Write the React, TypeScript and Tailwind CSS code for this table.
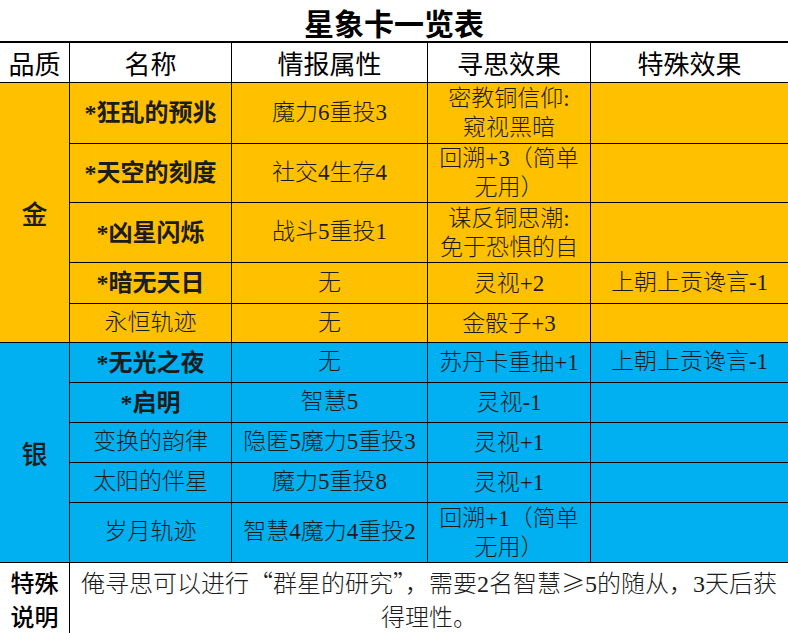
import React from "react";

type Card = {
  name: string;
  star?: boolean;
  info: string;
  think: string[];
  special?: string;
};

const goldCards: Card[] = [
  { name: "*狂乱的预兆", star: true, info: "魔力6重投3", think: ["密教铜信仰:", "窥视黑暗"] },
  { name: "*天空的刻度", star: true, info: "社交4生存4", think: ["回溯+3（简单", "无用）"] },
  { name: "*凶星闪烁", star: true, info: "战斗5重投1", think: ["谋反铜思潮:", "免于恐惧的自"] },
  { name: "*暗无天日", star: true, info: "无", think: ["灵视+2"], special: "上朝上贡谗言-1" },
  { name: "永恒轨迹", info: "无", think: ["金骰子+3"] },
];

const silverCards: Card[] = [
  { name: "*无光之夜", star: true, info: "无", think: ["苏丹卡重抽+1"], special: "上朝上贡谗言-1" },
  { name: "*启明", star: true, info: "智慧5", think: ["灵视-1"] },
  { name: "变换的韵律", info: "隐匿5魔力5重投3", think: ["灵视+1"] },
  { name: "太阳的伴星", info: "魔力5重投8", think: ["灵视+1"] },
  { name: "岁月轨迹", info: "智慧4魔力4重投2", think: ["回溯+1（简单", "无用）"] },
];

const serif = "font-['Liberation_Serif','Noto_Sans_CJK_SC',serif]";
const sans = "font-['Noto_Sans_CJK_SC','Liberation_Sans',sans-serif]";

function Cell({
  bg,
  children,
  className = "",
}: {
  bg: string;
  children?: React.ReactNode;
  className?: string;
}) {
  return (
    <div
      className={`${bg} flex flex-col items-center justify-center text-center overflow-hidden ${className}`}
    >
      {children}
    </div>
  );
}

function CardRow({ card, bg }: { card: Card; bg: string }) {
  return (
    <>
      <Cell
        bg={bg}
        className={`${serif} text-[#1c1c1c] whitespace-nowrap ${card.star ? "text-[24px] font-bold" : "text-[23px] font-light"}`}
      >
        {card.name}
      </Cell>
      <Cell bg={bg} className={`${serif} text-[23px] font-light text-[#1c1c1c] whitespace-nowrap`}>
        {card.info}
      </Cell>
      <Cell bg={bg} className={`${serif} text-[23px] font-light text-[#1c1c1c] leading-[29px] whitespace-nowrap`}>
        {card.think.map((line) => (
          <span key={line}>{line}</span>
        ))}
      </Cell>
      <Cell bg={bg} className={`${serif} text-[23px] font-light text-[#1c1c1c] whitespace-nowrap`}>
        {card.special}
      </Cell>
    </>
  );
}

export default function App() {
  const gold = "bg-[#ffc000]";
  const blue = "bg-[#00b0f0]";

  return (
    <div className="w-[788px] bg-white">
      {/* 标题 */}
      <div className={`h-[41px] pt-[2px] flex items-center justify-center ${sans} text-[30px] leading-[36px] font-bold text-black`}>
        星象卡一览表
      </div>

      {/* 表格 */}
      <div className="grid grid-cols-[69px_161px_195px_162px_197px] grid-rows-[39px_60px_58px_59px_40px_38px_39px_39px_39px_39px_59px_auto] gap-px bg-black border-t-2 border-black">
        {/* 表头 */}
        {["品质", "名称", "情报属性", "寻思效果", "特殊效果"].map((h) => (
          <Cell key={h} bg="bg-white" className={`${sans} text-[26px] leading-none text-black`}>
            {h}
          </Cell>
        ))}

        {/* 金 */}
        <Cell bg={gold} className={`row-span-5 ${sans} text-[26px] font-medium text-[#1c1c1c]`}>
          金
        </Cell>
        {goldCards.map((c) => (
          <CardRow key={c.name} card={c} bg={gold} />
        ))}

        {/* 银 */}
        <Cell bg={blue} className={`row-span-5 ${sans} text-[26px] font-medium text-[#1c1c1c]`}>
          银
        </Cell>
        {silverCards.map((c) => (
          <CardRow key={c.name} card={c} bg={blue} />
        ))}

        {/* 特殊说明 */}
        <div className={`bg-white pt-[2px] ${sans} text-[24px] font-medium leading-[34px] text-black text-center`}>
          特殊
          <br />
          说明
        </div>
        <div className={`col-span-4 bg-white pt-[2px] ${serif} text-[24px] font-light leading-[34px] text-[#1c1c1c] text-center whitespace-nowrap`}>
          俺寻思可以进行<span className={sans}>“</span>群星的研究<span className={sans}>”，</span>需要2名智慧<span className={sans}>≥</span>5的随从，3天后获
          <br />
          得理性。
        </div>
      </div>
    </div>
  );
}
